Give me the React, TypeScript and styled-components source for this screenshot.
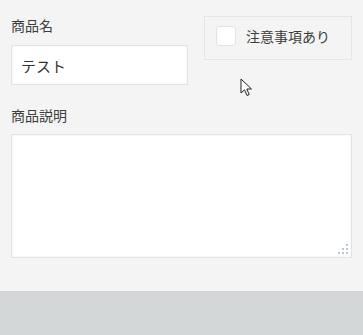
import React from "react";
import styled, { createGlobalStyle } from "styled-components";

const GlobalStyle = createGlobalStyle`
  html, body {
    margin: 0;
    padding: 0;
    background: #f4f4f4;
  }
  body {
    font-family: "Noto Sans CJK JP", "Noto Sans", sans-serif;
    color: #3c3c3c;
  }
`;

const Page = styled.div`
  position: relative;
  width: 363px;
  height: 335px;
  display: flex;
  flex-direction: column;
  background: #f4f4f4;
  overflow: hidden;
`;

const Form = styled.div`
  flex: 1;
  display: flex;
  flex-direction: column;
  padding: 15px 11px 0 11px;
`;

const TopRow = styled.div`
  display: flex;
  align-items: flex-start;
  gap: 16px;
`;

const Field = styled.div`
  display: flex;
  flex-direction: column;
  width: 177px;
`;

const Label = styled.label<{ $gap: number }>`
  font-size: 14px;
  line-height: 20px;
  color: #3c3c3c;
  margin-bottom: ${(p) => p.$gap}px;
`;

const TextInput = styled.input`
  box-sizing: border-box;
  width: 100%;
  height: 40px;
  padding: 0 9px;
  border: 1px solid #e1e3e4;
  background: #fff;
  box-shadow: inset 0 0 3px rgba(0, 0, 0, 0.06);
  font-family: "Noto Sans CJK JP", "Noto Sans", sans-serif;
  font-size: 15px;
  color: #333;
  outline: none;
`;

const CheckBox = styled.label`
  box-sizing: border-box;
  margin-top: 1px;
  width: 148px;
  height: 44px;
  display: flex;
  align-items: center;
  gap: 10px;
  padding: 0 0 4px 11px;
  border: 1px solid #e4e6e6;
  font-size: 14px;
  color: #3c3c3c;
`;

const Tick = styled.span`
  box-sizing: border-box;
  width: 20px;
  height: 20px;
  background: #fff;
  border: 1px solid #e1e4e5;
  border-radius: 3px;
  box-shadow: inset 0 0 2px rgba(0, 0, 0, 0.05);
`;

const DescField = styled.div`
  display: flex;
  flex-direction: column;
  margin-top: 20px;
`;

const AreaWrap = styled.div`
  position: relative;
  width: 341px;
  height: 124px;
`;

const TextArea = styled.textarea`
  box-sizing: border-box;
  display: block;
  width: 100%;
  height: 100%;
  resize: none;
  border: 1px solid #e1e3e4;
  background: #fff;
  box-shadow: inset 0 0 3px rgba(0, 0, 0, 0.06);
  outline: none;
`;

const Grip = styled.svg`
  position: absolute;
  right: 2px;
  bottom: 2px;
  pointer-events: none;
`;

const Footer = styled.div`
  height: 44px;
  background: #d3d6d7;
`;

const Cursor = styled.svg`
  position: absolute;
  left: 240px;
  top: 78px;
`;

export default function App() {
  return (
    <>
      <GlobalStyle />
      <Page>
        <Form>
          <TopRow>
            <Field>
              <Label $gap={10}>商品名</Label>
              <TextInput defaultValue="テスト" />
            </Field>
            <CheckBox>
              <Tick />
              注意事項あり
            </CheckBox>
          </TopRow>
          <DescField>
            <Label $gap={9}>商品説明</Label>
            <AreaWrap>
              <TextArea />
              <Grip width="12" height="12" viewBox="0 0 12 12">
                <g fill="#b5c8d8">
                  <rect x="8" y="0" width="2" height="2" />
                  <rect x="4" y="4" width="2" height="2" />
                  <rect x="8" y="4" width="2" height="2" />
                  <rect x="0" y="8" width="2" height="2" />
                  <rect x="4" y="8" width="2" height="2" />
                  <rect x="8" y="8" width="2" height="2" />
                </g>
              </Grip>
            </AreaWrap>
          </DescField>
        </Form>
        <Footer />
        <Cursor width="14" height="20" viewBox="0 0 14 20">
          <path
            d="M1 1 L1 15 L4.5 11.8 L7 17.5 L9.2 16.6 L6.8 11 L11.5 11 Z"
            fill="#fff"
            stroke="#222"
            strokeWidth="1"
            strokeLinejoin="round"
          />
        </Cursor>
      </Page>
    </>
  );
}
